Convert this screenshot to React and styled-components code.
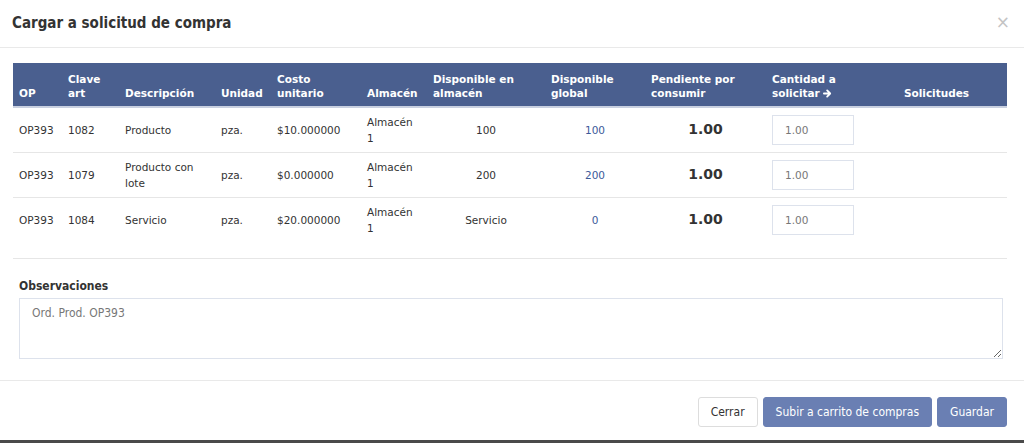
import styled, { createGlobalStyle } from "styled-components";

const GlobalStyle = createGlobalStyle`
  html, body { margin: 0; padding: 0; background: #4a4a4a; }
  body { font-family: "DejaVu Sans", Verdana, sans-serif; color: #333; }
  * { box-sizing: border-box; }
`;

const cols = [
  { key: "op", label: "OP", w: 49 },
  { key: "clave", label: "Clave art", w: 57 },
  { key: "desc", label: "Descripción", w: 96 },
  { key: "unidad", label: "Unidad", w: 56 },
  { key: "costo", label: "Costo unitario", w: 90 },
  { key: "alm", label: "Almacén", w: 66 },
  { key: "dispAlm", label: "Disponible en almacén", w: 118, center: true },
  { key: "dispGlob", label: "Disponible global", w: 100, center: true },
  { key: "pend", label: "Pendiente por consumir", w: 121, center: true },
  { key: "cant", label: "Cantidad a solicitar", w: 100, arrow: true },
  { key: "sol", label: "Solicitudes", w: 141, center: true, headCenter: true },
];

const rows = [
  { op: "OP393", clave: "1082", desc: "Producto", unidad: "pza.", costo: "$10.000000", alm: "Almacén 1", dispAlm: "100", dispGlob: "100" },
  { op: "OP393", clave: "1079", desc: "Producto con lote", unidad: "pza.", costo: "$0.000000", alm: "Almacén 1", dispAlm: "200", dispGlob: "200" },
  { op: "OP393", clave: "1084", desc: "Servicio", unidad: "pza.", costo: "$20.000000", alm: "Almacén 1", dispAlm: "Servicio", dispGlob: "0" },
];

const Modal = styled.div`
  background: #fff;
  height: 440px;
  display: flex;
  flex-direction: column;
`;

const Header = styled.div`
  height: 48px;
  border-bottom: 1px solid #e9e9e9;
  display: flex;
  align-items: center;
  justify-content: space-between;
  padding: 0 14px 2px 12px;
`;

const Title = styled.h4`
  margin: 0;
  font-family: "DejaVu Sans Condensed", "Liberation Sans Narrow", sans-serif;
  font-stretch: condensed;
  font-size: 15px;
  font-weight: bold;
  color: #333;
`;

const Close = styled.span`
  font-family: "DejaVu Sans", sans-serif;
  font-size: 17px;
  color: #c4c4c4;
  line-height: 1;
`;

const Body = styled.div`
  padding: 15px 17px 0 13px;
`;

const Table = styled.table`
  width: 994px;
  border-collapse: collapse;
  table-layout: fixed;
`;

const Th = styled.th`
  background: #4a5f8f;
  color: #fff;
  font-size: 10.5px;
  font-weight: bold;
  text-align: ${(p) => (p.$center ? "center" : "left")};
  vertical-align: bottom;
  padding: 6px 6px 6px;
  line-height: 14px;
  height: 44px;
  border-bottom: 2px solid #c9d0e0;
`;

const Td = styled.td`
  font-size: 10.5px;
  color: #333;
  text-align: ${(p) => (p.$center ? "center" : "left")};
  vertical-align: middle;
  padding: 4px 6px;
  line-height: 16px;
  height: 45px;
  border-bottom: 1px solid #e6e6e6;
`;

const Row = styled.tr`
  &:nth-last-child(2) td {
    border-bottom: none;
  }
`;

const Link = styled.span`
  color: #3c5a9a;
`;

const Big = styled.span`
  font-size: 14px;
  font-weight: bold;
  color: #333;
`;

const Arrow = styled.svg`
  width: 9px;
  height: 9px;
  margin-left: 3px;
  vertical-align: -1px;
`;

const QtyInput = styled.input`
  width: 82px;
  height: 30px;
  border: 1px solid #dde2ec;
  padding: 0 12px;
  font-family: "DejaVu Sans", sans-serif;
  font-size: 10.5px;
  color: #777;
  outline: none;
`;

const SpacerRow = styled.td`
  height: 16px;
  border-bottom: 1px solid #e6e6e6;
`;

const Field = styled.div`
  padding: 20px 4px 20px 6px;
`;

const Label = styled.label`
  display: block;
  font-family: "DejaVu Sans Condensed", sans-serif;
  font-stretch: condensed;
  font-weight: bold;
  font-size: 12px;
  color: #333;
  margin-bottom: 5px;
`;

const TextArea = styled.textarea`
  display: block;
  width: 984px;
  height: 61px;
  border: 1px solid #dde2ec;
  padding: 7px 12px;
  font-family: "DejaVu Sans Condensed", sans-serif;
  font-stretch: condensed;
  font-size: 12px;
  color: #777;
  resize: vertical;
  outline: none;
`;

const Footer = styled.div`
  margin-top: auto;
  border-top: 1px solid #e9e9e9;
  display: flex;
  justify-content: flex-end;
  gap: 5px;
  padding: 16px 17px 13px;
`;

const Button = styled.button`
  height: 30px;
  padding: 0 12px;
  border-radius: 3px;
  font-family: "DejaVu Sans Condensed", sans-serif;
  font-stretch: condensed;
  font-size: 12px;
  border: 1px solid ${(p) => (p.$primary ? "#6a7fb3" : "#ddd")};
  background: ${(p) => (p.$primary ? "#6a7fb3" : "#fff")};
  color: ${(p) => (p.$primary ? "#fff" : "#333")};
`;

function ArrowRight() {
  return (
    <Arrow viewBox="0 0 10 10" aria-hidden="true">
      <path d="M1 5h6.5M4.6 1.6L8 5 4.6 8.4" fill="none" stroke="#fff" strokeWidth="2" strokeLinecap="round" strokeLinejoin="round" />
    </Arrow>
  );
}

function Cell({ col, row }) {
  if (col.key === "dispGlob") return <Td $center><Link>{row.dispGlob}</Link></Td>;
  if (col.key === "pend") return <Td $center><Big>1.00</Big></Td>;
  if (col.key === "cant") return <Td><QtyInput defaultValue="1.00" /></Td>;
  if (col.key === "sol") return <Td />;
  return <Td $center={col.center}>{row[col.key]}</Td>;
}

export default function App() {
  return (
    <>
      <GlobalStyle />
      <Modal>
        <Header>
          <Title>Cargar a solicitud de compra</Title>
          <Close>×</Close>
        </Header>
        <Body>
          <Table>
            <colgroup>
              {cols.map((c) => (
                <col key={c.key} style={{ width: c.w }} />
              ))}
            </colgroup>
            <thead>
              <tr>
                {cols.map((c) => (
                  <Th key={c.key} $center={c.headCenter}>
                    {c.label}
                    {c.arrow && <ArrowRight />}
                  </Th>
                ))}
              </tr>
            </thead>
            <tbody>
              {rows.map((r, i) => (
                <Row key={i}>
                  {cols.map((c) => (
                    <Cell key={c.key} col={c} row={r} />
                  ))}
                </Row>
              ))}
              <tr>
                <SpacerRow colSpan={cols.length} />
              </tr>
            </tbody>
          </Table>
          <Field>
            <Label>Observaciones</Label>
            <TextArea defaultValue="Ord. Prod. OP393" />
          </Field>
        </Body>
        <Footer>
          <Button>Cerrar</Button>
          <Button $primary>Subir a carrito de compras</Button>
          <Button $primary>Guardar</Button>
        </Footer>
      </Modal>
    </>
  );
}
